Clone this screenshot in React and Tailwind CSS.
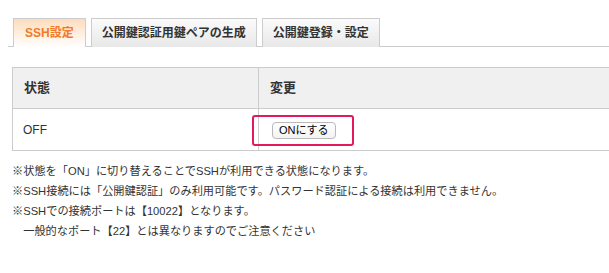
import React from "react";

const font = { fontFamily: '"Liberation Sans", "Noto Sans CJK JP", sans-serif' };

const Tab = ({ label, active }) => (
  <div
    className={
      active
        ? "h-[29px] -mb-px flex items-center px-[11px] border border-b-0 border-[#cccccc] bg-gradient-to-b from-[#fddcbd] to-white text-[12px] font-bold text-[#f27a26]"
        : "h-[29px] -mb-px flex items-center px-[10px] border border-b-0 border-[#cccccc] bg-gradient-to-b from-[#fbfbfb] to-[#e8e8e8] text-[12px] font-bold text-[#333333]"
    }
  >
    {label}
  </div>
);

export default function App() {
  return (
    <div className="w-[609px] h-[273px] overflow-hidden bg-white text-[#333333]" style={font}>
      {/* tabs */}
      <div className="pt-[18px] pl-2">
        <div className="flex items-end gap-[5px] pl-[5px] border-b border-[#cccccc]">
          <Tab label="SSH設定" active />
          <Tab label="公開鍵認証用鍵ペアの生成" />
          <Tab label="公開鍵登録・設定" />
        </div>
      </div>

      {/* status table */}
      <div className="mt-5 pl-3">
        <table className="w-[800px] border-collapse text-[13px]">
          <tbody>
            <tr className="h-[41px] bg-[#f0f0f0]">
              <th className="w-[246px] border border-[#cccccc] px-[11px] text-left font-bold">状態</th>
              <th className="border border-[#cccccc] px-[11px] text-left font-bold">変更</th>
            </tr>
            <tr className="h-[42px]">
              <td className="border border-[#cccccc] px-[10px] text-[12px]">OFF</td>
              <td className="border border-[#cccccc] px-[13px]">
                <span className="relative inline-flex">
                  <button className="h-[17px] px-[6px] flex items-center rounded-[4px] border border-[#b9b9b9] bg-gradient-to-b from-white to-[#f3f3f3] text-[11px] text-black leading-none">
                    ONにする
                  </button>
                  <span className="absolute -left-[20px] -right-[18px] -top-[7px] -bottom-[7px] border-2 border-[#e2195c] rounded-[3px]" />
                </span>
              </td>
            </tr>
          </tbody>
        </table>
      </div>

      {/* notes */}
      <div className="mt-[10px] pl-3 text-[11.2px] leading-[20px]">
        <p>※状態を「ON」に切り替えることでSSHが利用できる状態になります。</p>
        <p>※SSH接続には「公開鍵認証」のみ利用可能です。パスワード認証による接続は利用できません。</p>
        <p>※SSHでの接続ポートは【10022】となります。</p>
        <p>　一般的なポート【22】とは異なりますのでご注意ください</p>
      </div>
    </div>
  );
}
